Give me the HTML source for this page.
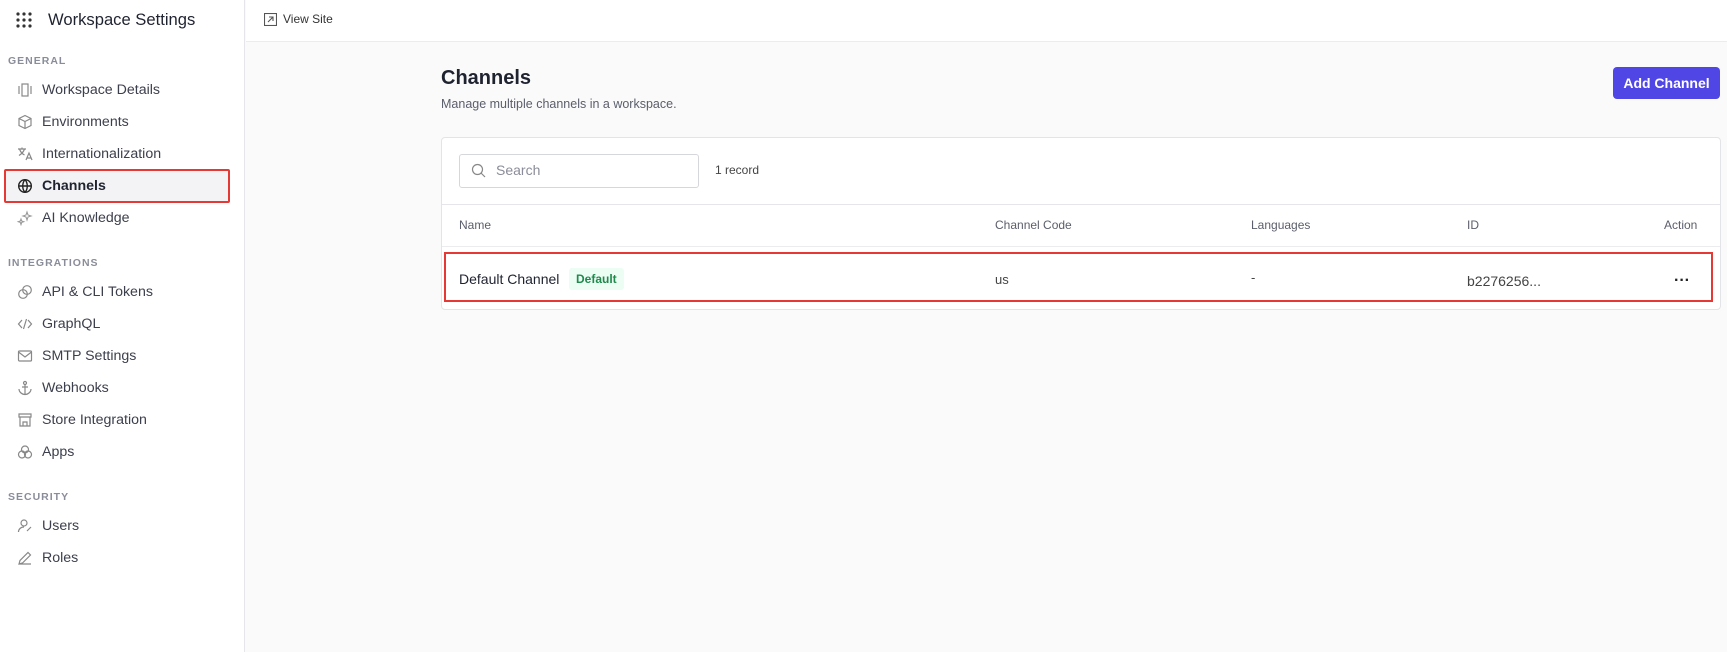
<!DOCTYPE html><html><head><style>
*{box-sizing:border-box;margin:0;padding:0}
body{width:1727px;height:652px;font-family:"Liberation Sans","DejaVu Sans",sans-serif;background:#fafafa;color:#1f2330;position:relative;overflow:hidden}
.side{position:absolute;left:0;top:0;width:245px;height:652px;background:#fff;border-right:1px solid #e6e6ea}
.abs{position:absolute;white-space:nowrap}
.sec{font-size:10.5px;letter-spacing:1px;color:#8a8d99;font-weight:bold;left:8px}
.it{left:42px;font-size:14.2px;color:#3c3f4c;transform:translateY(-50%)}
.ic{left:17px;width:16px;height:16px;transform:translateY(-50%)}
.top{position:absolute;left:246px;top:0;right:0;height:42px;background:#fff;border-bottom:1px solid #ececef}
.card{position:absolute;left:441px;top:137px;width:1280px;height:173px;background:#fff;border:1px solid #e3e4e8;border-radius:4px}
.th{font-size:12px;color:#5b5e6b;top:218px}
</style></head><body>
<div class="side">
<svg class="abs" style="left:16px;top:12px" width="16" height="16"><g fill="#333">
<circle cx="2" cy="2" r="1.6"/><circle cx="8" cy="2" r="1.6"/><circle cx="14" cy="2" r="1.6"/><circle cx="2" cy="8" r="1.6"/><circle cx="8" cy="8" r="1.6"/><circle cx="14" cy="8" r="1.6"/><circle cx="2" cy="14" r="1.6"/><circle cx="8" cy="14" r="1.6"/><circle cx="14" cy="14" r="1.6"/></g></svg>
<div class="abs" style="left:48px;top:10px;font-size:16.6px;color:#1f2330">Workspace Settings</div>
<div class="abs sec" style="top:55px">GENERAL</div>
<div class="abs" style="left:4px;top:169px;width:226px;height:34px;background:#f3f3f6;border:2px solid #e53935;border-radius:2px"></div>
<div class="abs it" style="top:90px">Workspace Details</div>
<div class="abs it" style="top:122px">Environments</div>
<div class="abs it" style="top:154px">Internationalization</div>
<div class="abs it" style="top:186px;font-weight:bold;color:#1f2330">Channels</div>
<div class="abs it" style="top:218px">AI Knowledge</div>
<div class="abs sec" style="top:257px">INTEGRATIONS</div>
<div class="abs it" style="top:292px">API &amp; CLI Tokens</div>
<div class="abs it" style="top:324px">GraphQL</div>
<div class="abs it" style="top:356px">SMTP Settings</div>
<div class="abs it" style="top:388px">Webhooks</div>
<div class="abs it" style="top:420px">Store Integration</div>
<div class="abs it" style="top:452px">Apps</div>
<div class="abs sec" style="top:491px">SECURITY</div>
<div class="abs it" style="top:526px">Users</div>
<div class="abs it" style="top:558px">Roles</div>
<svg class="abs ic" style="top:90px" viewBox="0 0 16 16" fill="none" stroke="#888" stroke-width="1.2"><rect x="5" y="2" width="6" height="12"/><path d="M2 4v8M14 4v8"/></svg>
<svg class="abs ic" style="top:122px" viewBox="0 0 16 16" fill="none" stroke="#888" stroke-width="1.2"><path d="M8 1.5l6 3v7l-6 3-6-3v-7zM2 4.5l6 3 6-3M8 7.5v7"/></svg>
<svg class="abs ic" style="top:154px" viewBox="0 0 16 16" fill="none" stroke="#888" stroke-width="1.2"><path d="M1 3h8M5 1.5v1.5M2.5 3c1 3 3 5 5 6M7.5 3c-1 3-3 5-5.5 6.5M9 14l3-7 3 7M10 12h4"/></svg>
<svg class="abs ic" style="top:186px" viewBox="0 0 16 16" fill="none" stroke="#222" stroke-width="1.4"><circle cx="8" cy="8" r="6.3"/><path d="M1.7 8h12.6M8 1.7c-3 3-3 9.6 0 12.6M8 1.7c3 3 3 9.6 0 12.6"/></svg>
<svg class="abs ic" style="top:218px" viewBox="0 0 16 16" fill="none" stroke="#999" stroke-width="1.1"><path d="M10 2l1 3 3 1-3 1-1 3-1-3-3-1 3-1zM4 9l.7 2 2 .7-2 .7L4 14.5l-.7-2.1-2-.7 2-.7z"/></svg>
<svg class="abs ic" style="top:292px" viewBox="0 0 16 16" fill="none" stroke="#888" stroke-width="1.2"><circle cx="6" cy="10" r="4.3"/><circle cx="10" cy="6" r="4.3"/></svg>
<svg class="abs ic" style="top:324px" viewBox="0 0 16 16" fill="none" stroke="#888" stroke-width="1.2"><path d="M5 4L1.5 8 5 12M11 4l3.5 4-3.5 4M9.5 3l-3 10"/></svg>
<svg class="abs ic" style="top:356px" viewBox="0 0 16 16" fill="none" stroke="#888" stroke-width="1.2"><rect x="1.5" y="3" width="13" height="10" rx="1"/><path d="M1.5 4l6.5 5 6.5-5"/></svg>
<svg class="abs ic" style="top:388px" viewBox="0 0 16 16" fill="none" stroke="#888" stroke-width="1.2"><circle cx="8" cy="3" r="1.5"/><path d="M8 4.5v10M5 7h6M2 9c0 3 3 5.5 6 5.5s6-2.5 6-5.5"/></svg>
<svg class="abs ic" style="top:420px" viewBox="0 0 16 16" fill="none" stroke="#888" stroke-width="1.2"><path d="M2 2h12v3H2zM3 5v9h10V5M6 14v-4h4v4"/></svg>
<svg class="abs ic" style="top:452px" viewBox="0 0 16 16" fill="none" stroke="#888" stroke-width="1.2"><circle cx="8" cy="5.5" r="3.5"/><circle cx="5" cy="10.5" r="3.5"/><circle cx="11" cy="10.5" r="3.5"/></svg>
<svg class="abs ic" style="top:526px" viewBox="0 0 16 16" fill="none" stroke="#888" stroke-width="1.2"><circle cx="7" cy="5" r="3"/><path d="M1.5 14c0-3 2.5-5 5.5-5M10 13l4-4"/></svg>
<svg class="abs ic" style="top:558px" viewBox="0 0 16 16" fill="none" stroke="#888" stroke-width="1.2"><path d="M2 14l1-3.5L11 2.5l2.5 2.5-8 8zM2 14h12"/></svg>
</div>
<div class="top">
<svg class="abs" style="left:18px;top:13px" width="13" height="13" viewBox="0 0 13 13" fill="none" stroke="#555" stroke-width="1.1"><rect x="0.5" y="0.5" width="12" height="12"/><path d="M4 9l5-5M5 4h4v4"/></svg>
<div class="abs" style="left:37px;top:12px;font-size:12px;color:#333">View Site</div>
</div>
<div class="abs" style="left:441px;top:67px;font-size:20px;font-weight:bold;color:#1f2330">Channels</div>
<div class="abs" style="left:441px;top:97px;font-size:12.5px;color:#5b5e6b">Manage multiple channels in a workspace.</div>
<div class="abs" style="left:1613px;top:67px;width:107px;height:32px;background:#4f46e5;border-radius:4px;color:#fff;font-weight:bold;font-size:14px;line-height:32px;text-align:center">Add Channel</div>
<div class="card"></div>
<div class="abs" style="left:459px;top:154px;width:240px;height:34px;border:1px solid #d6d7dc;border-radius:3px;background:#fff"></div>
<svg class="abs" style="left:471px;top:163px" width="15" height="15" viewBox="0 0 15 15" fill="none" stroke="#888" stroke-width="1.2"><circle cx="6.5" cy="6.5" r="5"/><path d="M10 10l4 4"/></svg>
<div class="abs" style="left:496px;top:162px;font-size:14px;color:#8a8d99">Search</div>
<div class="abs" style="left:715px;top:163px;font-size:12px;color:#444">1 record</div>
<div class="abs" style="left:442px;top:204px;width:1278px;height:1px;background:#e6e6ea"></div>
<div class="abs" style="left:442px;top:246px;width:1278px;height:1px;background:#ececef"></div>
<div class="abs th" style="left:459px">Name</div>
<div class="abs th" style="left:995px">Channel Code</div>
<div class="abs th" style="left:1251px">Languages</div>
<div class="abs th" style="left:1467px">ID</div>
<div class="abs th" style="left:1664px">Action</div>
<div class="abs" style="left:444px;top:252px;width:1269px;height:50px;border:2px solid #e53935"></div>
<div class="abs" style="left:459px;top:271px;font-size:14px;color:#1f2330">Default Channel</div>
<div class="abs" style="left:569px;top:268px;padding:0 7px;height:22px;line-height:22px;background:#ecfdf3;color:#1f8a4c;font-size:12px;font-weight:bold;border-radius:3px">Default</div>
<div class="abs" style="left:995px;top:272px;font-size:13px;color:#444">us</div>
<div class="abs" style="left:1251px;top:270px;font-size:13px;color:#444">-</div>
<div class="abs" style="left:1467px;top:273px;font-size:14px;color:#444">b2276256...</div>
<div class="abs" style="left:1674px;top:272px;font-size:16px;font-weight:bold;color:#222">···</div>
</body></html>
